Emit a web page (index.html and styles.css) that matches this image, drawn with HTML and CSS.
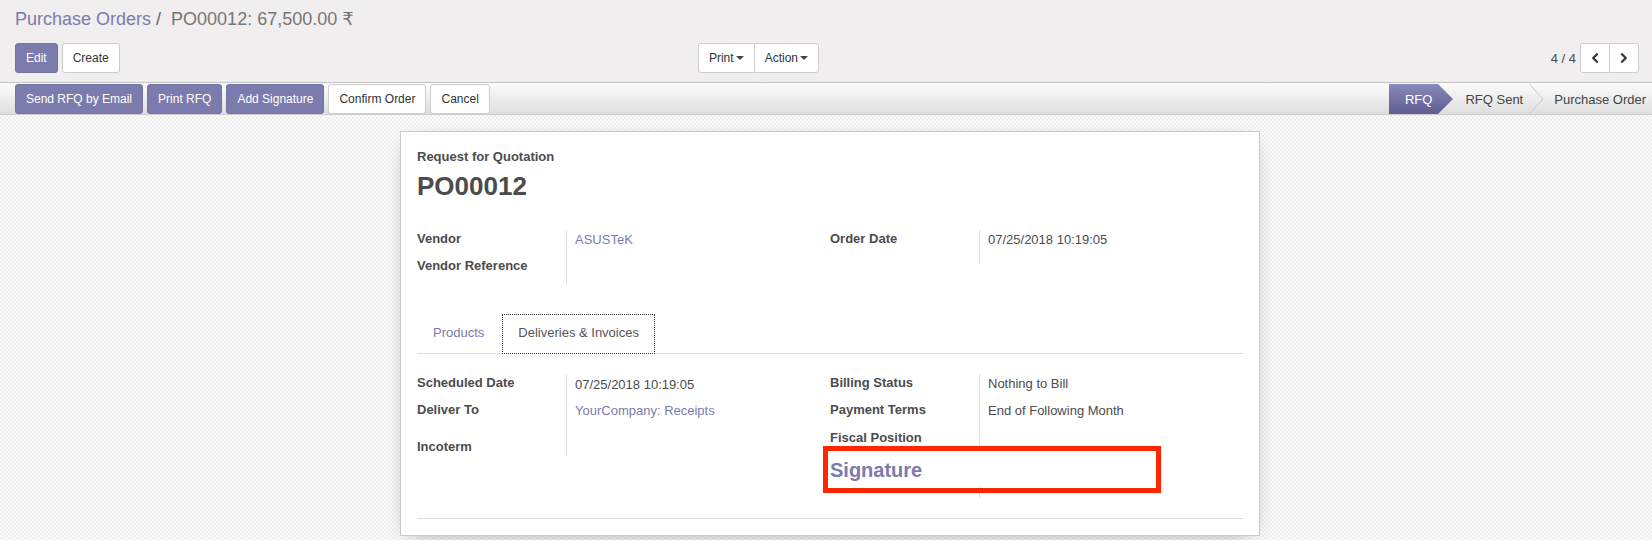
FILE: index.html
```html
<!DOCTYPE html>
<html>
<head>
<meta charset="utf-8">
<title>PO00012</title>
<link rel="stylesheet" href="styles.css">
</head>
<body>
<div class="cp">
  <div class="breadcrumb"><span class="bc-link">Purchase Orders</span><span class="bc-sep">/&nbsp;</span><span class="bc-active">PO00012: 67,500.00 ₹</span></div>
  <div class="cp-row">
    <div class="cp-left">
      <div class="btns">
        <button class="btn primary">Edit</button>
        <button class="btn">Create</button>
      </div>
      <div class="btn-group">
        <button class="btn">Print<span class="caret"></span></button>
        <button class="btn">Action<span class="caret"></span></button>
      </div>
    </div>
    <div class="pager">
      <span class="pager-value">4 / 4</span>
      <div class="btn-group">
        <button class="btn pbtn"><svg width="8" height="10" viewBox="0 0 8 10"><path d="M6 1.2 L2.2 5 L6 8.8" fill="none" stroke="#333" stroke-width="2.2" stroke-linecap="round" stroke-linejoin="round"/></svg></button>
        <button class="btn pbtn"><svg width="8" height="10" viewBox="0 0 8 10"><path d="M2 1.2 L5.8 5 L2 8.8" fill="none" stroke="#333" stroke-width="2.2" stroke-linecap="round" stroke-linejoin="round"/></svg></button>
      </div>
    </div>
  </div>
</div>
<div class="statusbar">
  <div class="sb-buttons">
    <button class="btn primary">Send RFQ by Email</button>
    <button class="btn primary">Print RFQ</button>
    <button class="btn primary">Add Signature</button>
    <button class="btn">Confirm Order</button>
    <button class="btn">Cancel</button>
  </div>
  <div class="sb-status">
    <span class="st active">RFQ</span>
    <svg class="st-arrow" width="15" height="30" viewBox="0 0 15 30"><defs><linearGradient id="ag" x1="0" y1="0" x2="0" y2="1"><stop offset="0" stop-color="#8a89bc"/><stop offset="1" stop-color="#5e5d90"/></linearGradient></defs><polygon points="0,0 15,15 0,30" fill="url(#ag)"/></svg>
    <span class="st">RFQ Sent</span>
    <svg class="st-arrow" width="15" height="30" viewBox="0 0 15 30"><polyline points="0.5,0 14,15 0.5,30" fill="none" stroke="#c9c9c9" stroke-width="1"/></svg>
    <span class="st last">Purchase Order</span>
  </div>
</div>
<div class="sheet-bg">
  <div class="sheet">
    <div class="title-label">Request for Quotation</div>
    <h1 class="title">PO00012</h1>

    <div class="groups">
      <div class="group">
        <div class="lbl h27">Vendor</div><div class="val h27"><span class="link">ASUSTeK</span></div>
        <div class="lbl h27">Vendor Reference</div><div class="val h27"></div>
      </div>
      <div class="group">
        <div class="lbl h34">Order Date</div><div class="val h34">07/25/2018 10:19:05</div>
      </div>
    </div>

    <div class="notebook">
      <ul class="tabs">
        <li class="tab">Products</li>
        <li class="tab active">Deliveries &amp; Invoices</li>
      </ul>
      <div class="tab-content">
        <div class="groups">
          <div class="group">
            <div class="lbl h27">Scheduled Date</div><div class="val h27 lower">07/25/2018 10:19:05</div>
            <div class="lbl h37">Deliver To</div><div class="val h37"><span class="link">YourCompany: Receipts</span></div>
            <div class="lbl h18">Incoterm</div><div class="val h18"></div>
          </div>
          <div class="group">
            <div class="lbl h27">Billing Status</div><div class="val h27">Nothing to Bill</div>
            <div class="lbl h28">Payment Terms</div><div class="val h28">End of Following Month</div>
            <div class="lbl h18">Fiscal Position</div><div class="val h18"></div>
            <div class="sep-row">
              <div class="sig">Signature</div>
              <div class="annot"></div>
            </div>
            <div class="lbl h12"></div><div class="val h12"></div>
          </div>
        </div>
      </div>
    </div>
    <div class="bottom-line"></div>
  </div>
</div>
</body>
</html>
```

FILE: styles.css
```css
html, body {
  margin: 0;
  padding: 0;
  height: 540px;
  overflow: hidden;
}
body {
  font-family: "Liberation Sans", Arial, "DejaVu Sans", sans-serif;
  font-size: 13px;
  color: #4c4c4c;
  background: #f0eeee;
}

/* control panel */
.cp {
  background: #f0eeee;
  padding: 8px 13px 9px 15px;
  border-bottom: 1px solid #c2c2c2;
}
.breadcrumb {
  font-size: 18px;
  line-height: 23px;
  white-space: nowrap;
}
.bc-link { color: #7c7bad; }
.bc-sep { color: #666; padding: 0 5px; }
.bc-active { color: #777; }

.cp-row {
  display: flex;
  align-items: center;
  margin-top: 12px;
  height: 30px;
}
.cp-left {
  flex: 0 0 804px;
  display: flex;
  justify-content: space-between;
  align-items: center;
}
.btns { display: flex; gap: 4px; }

.btn {
  box-sizing: border-box;
  height: 30px;
  padding: 0 10px;
  margin: 0;
  font-family: inherit;
  font-size: 12px;
  line-height: 28px;
  color: #333;
  background: #fff;
  border: 1px solid #ccc;
  border-radius: 3px;
  white-space: nowrap;
  display: inline-flex;
  align-items: center;
}
.btn.primary {
  background: #7c7bad;
  border-color: #7473a6;
  color: #fff;
}
.btn-group { display: flex; }
.btn-group .btn { border-radius: 0; }
.btn-group .btn:first-child { border-radius: 3px 0 0 3px; }
.btn-group .btn:last-child { border-radius: 0 3px 3px 0; margin-left: -1px; }
.caret {
  display: inline-block;
  width: 0;
  height: 0;
  margin-left: 2px;
  border-top: 4px solid #444;
  border-left: 4px solid transparent;
  border-right: 4px solid transparent;
}

.pager {
  margin-left: auto;
  display: flex;
  align-items: center;
}
.pager-value {
  font-size: 13px;
  margin-right: 4px;
  color: #4c4c4c;
}
.pbtn { padding: 0 10px; }

/* status bar */
.statusbar {
  box-sizing: border-box;
  height: 32px;
  padding: 1px 0 0 15px;
  display: flex;
  justify-content: space-between;
  background: linear-gradient(#fcfcfc, #dedede);
  border-bottom: 1px solid #cdcdcd;
}
.sb-buttons { display: flex; gap: 4px; }
.sb-status {
  display: flex;
  height: 30px;
}
.st {
  display: flex;
  align-items: center;
  height: 30px;
  padding: 0 6px 0 12px;
  font-size: 13px;
  color: #444;
  white-space: nowrap;
}
.st.active {
  padding-left: 16px;
  color: #fff;
  background: linear-gradient(#8a89bc, #5e5d90);
}
.st.last { padding-left: 10px; }
.st-arrow { display: block; flex: 0 0 15px; }

/* sheet */
.sheet-bg {
  height: 425px;
  padding-top: 16px;
  box-sizing: border-box;
  background-color: #f6f6f6;
  background-image: repeating-conic-gradient(#efefef 0% 25%, #fbfbfb 0% 50%);
  background-size: 4px 4px;
}
.sheet {
  position: relative;
  box-sizing: border-box;
  width: 860px;
  margin-left: 400px;
  padding: 16px 16px 16px;
  background: #fff;
  border: 1px solid #c9c9d1;
  box-shadow: 0 5px 20px -10px rgba(0, 0, 0, 0.45);
}
.title-label {
  font-weight: bold;
  font-size: 13px;
  line-height: 18px;
  color: #4c4c4c;
}
.title {
  margin: 6px 0 0;
  font-size: 26px;
  line-height: 29px;
  font-weight: bold;
  color: #4c4c4c;
}

.groups {
  display: grid;
  grid-template-columns: 1fr 1fr;
  align-items: start;
  margin-top: 29px;
}
.tab-content .groups { margin-top: 0; }
.group {
  display: grid;
  grid-template-columns: 150px 1fr;
}
.lbl {
  box-sizing: border-box;
  border-right: 1px solid #ddd;
  font-weight: bold;
  line-height: 18px;
  color: #4c4c4c;
  white-space: nowrap;
}
.val {
  box-sizing: border-box;
  padding: 1px 0 0 8px;
  line-height: 18px;
  color: #4c4c4c;
  white-space: nowrap;
}
.val.lower { padding-top: 2px; }
.link { color: #7c7bad; }
.h12 { height: 12px; }
.h18 { height: 18px; }
.h27 { height: 27px; }
.h28 { height: 28px; }
.h34 { height: 34px; }
.h37 { height: 37px; }

.sep-row {
  grid-column: 1 / -1;
  position: relative;
  box-sizing: border-box;
  height: 39px;
  padding-top: 11px;
}
.sig {
  font-size: 20px;
  line-height: 24px;
  font-weight: bold;
  color: #7c7bad;
}
.annot {
  position: absolute;
  left: -7px;
  top: -1px;
  width: 338px;
  height: 47px;
  box-sizing: border-box;
  border: 5px solid #ff2600;
}

.notebook { margin-top: 30px; }
.tabs {
  display: flex;
  list-style: none;
  margin: 0;
  padding: 0;
  border-bottom: 1px solid #ddd;
}
.tab {
  padding: 9px 15px 11px;
  line-height: 18px;
  font-size: 13px;
  color: #7c7bad;
  border: 1px solid transparent;
  margin: 0 2px -1px 0;
  white-space: nowrap;
}
.tab.active {
  color: #555;
  background: #fff;
  border: 1px dotted #333;
}
.tab-content { padding-top: 20px; }
.bottom-line {
  margin-top: 20px;
  height: 1px;
  background: #ddd;
}
```
